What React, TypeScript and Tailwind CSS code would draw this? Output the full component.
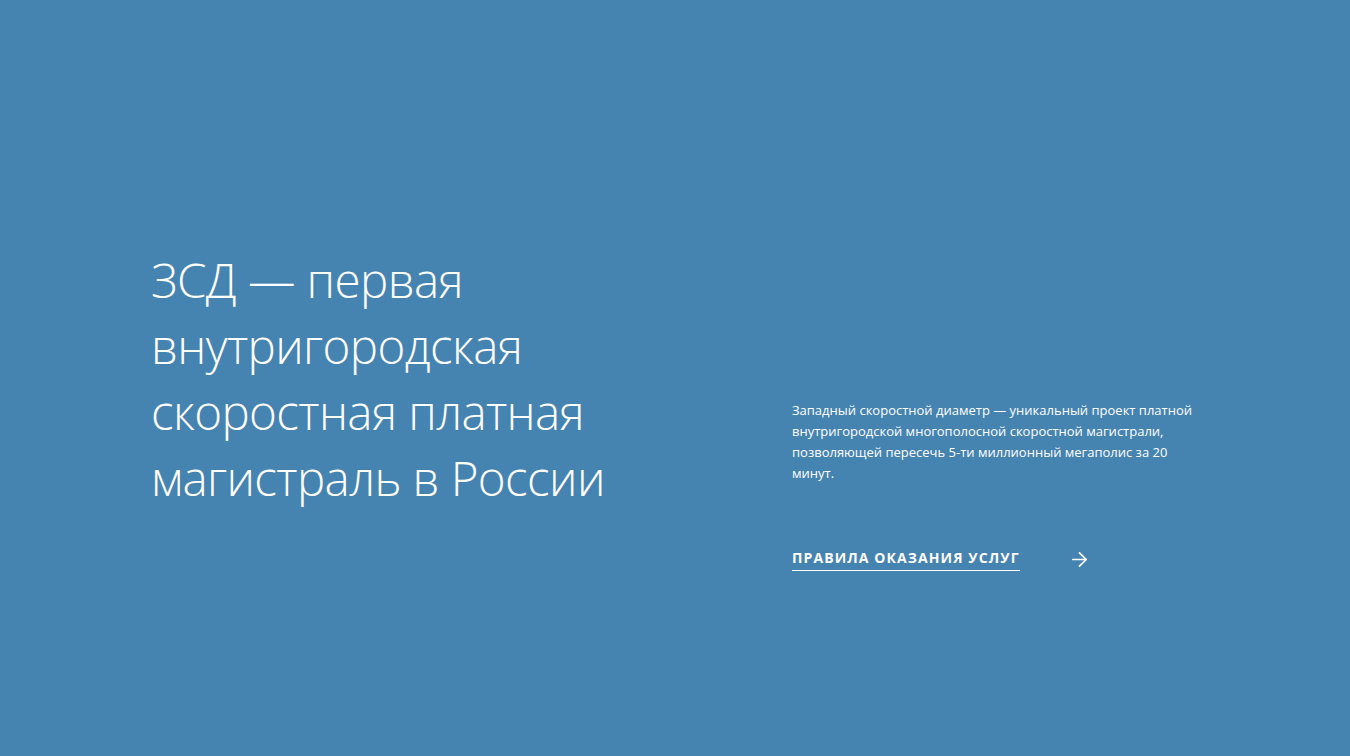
import { ArrowRight } from 'lucide-react';

export default function App() {
  return (
    <div
      className="w-full h-[756px] bg-[#4583b1] text-white flex items-start pl-[151px] overflow-hidden"
      style={{ fontFamily: '"Open Sans", "Noto Sans", sans-serif' }}
    >
      {/* Headline */}
      <div className="w-[641px] shrink-0 pt-[247px]">
        <h1 className="text-[47.5px] leading-[66px] font-light tracking-[-0.6px]">
          ЗСД — первая
          <br />
          внутригородская
          <br />
          скоростная платная
          <br />
          магистраль в России
        </h1>
      </div>

      {/* Description + link */}
      <div className="w-[420px] pt-[400px]">
        <p className="text-[13px] leading-[21px]">
          Западный скоростной диаметр — уникальный проект платной внутригородской многополосной скоростной магистрали,
          позволяющей пересечь 5-ти миллионный мегаполис за 20 минут.
        </p>

        <a href="#" className="mt-[63px] flex items-center w-[300px]">
          <span className="text-[14px] font-bold uppercase tracking-[1.1px] border-b border-white pb-[2px]">
            Правила оказания услуг
          </span>
          <ArrowRight className="ml-auto mr-[1px]" size={23} strokeWidth={1.8} />
        </a>
      </div>
    </div>
  );
}
